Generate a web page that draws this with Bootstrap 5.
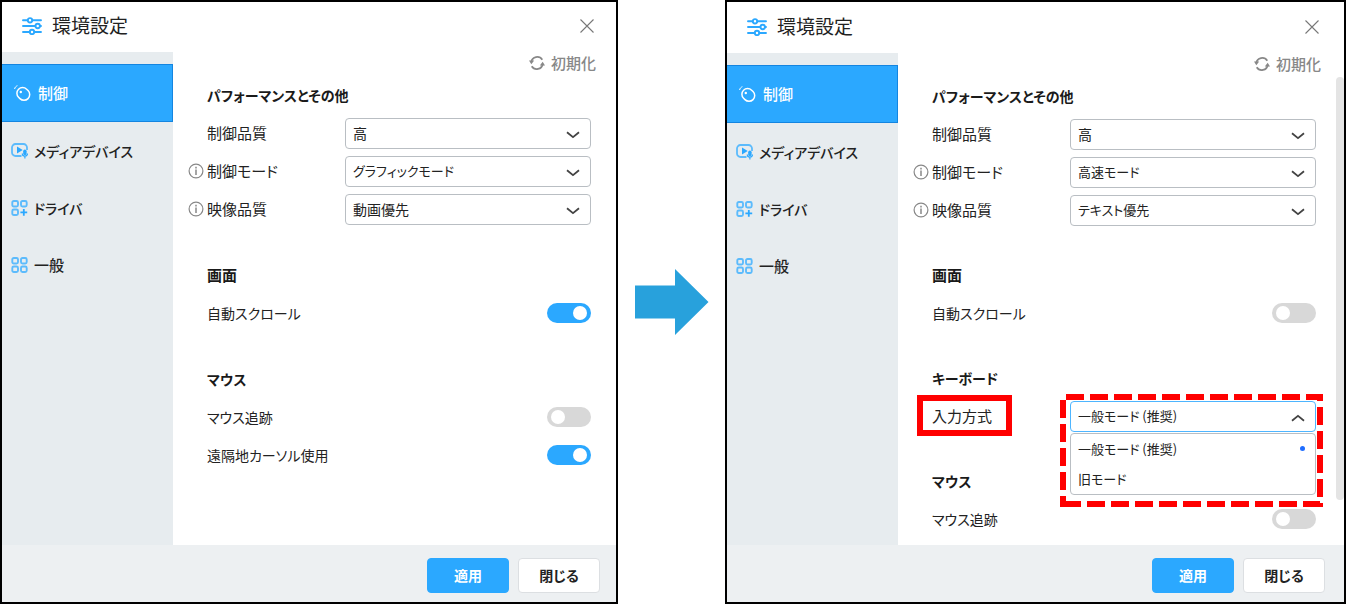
<!DOCTYPE html>
<html lang="ja">
<head>
<meta charset="utf-8">
<meta name="viewport" content="width=device-width, initial-scale=1">
<title>環境設定</title>
<link href="https://cdn.jsdelivr.net/npm/bootstrap@5.3.0/dist/css/bootstrap.min.css" rel="stylesheet">
<style>
  :root { --accent: #2ba8ff; --side-bg: #e7ecef; --callout: #ff0000; }
  body { font-family: "Noto Sans CJK JP", sans-serif; font-size: 15px; line-height: 20px; color: #222; background: #fff; }
  body, button, select, option { font-feature-settings: "palt"; }
  .compare { display: grid; grid-template-columns: 618fr 107fr 621fr; min-height: 100vh; }
  .settings { --edge: 0px; border: 2px solid #000; min-width: 0; }
  .settings-after { --edge: 3px; }
  .titlebar { height: 50px; padding: 0 calc(22px + var(--edge)) 2px 20px; }
  .settings-after .titlebar { height: 51px; }
  .titlebar h1 { font-size: 19px; line-height: 24px; font-weight: 400; margin: 0 0 2px 10px; }
  .close-x { border: 0; padding: 0; background: none; line-height: 0; }
  .side { width: 171px; background: var(--side-bg); padding-top: 12px; }
  .side .nav-link { height: 57px; padding: 0 9px; color: #222; font-weight: 500; border-radius: 0; gap: 6px; }
  .side .nav-link.active { height: 58px; background: var(--accent); border: 1px solid #1485e0; border-left: 0; color: #fff; padding-left: 11px; }
  .pane { padding: 0 calc(25px + var(--edge)) 0 15px; min-width: 0; }
  .scrolls .pane { padding-right: 20px; }
  .reset { height: 22px; margin: 0 -5px 2px 0; }
  .reset button { border: 0; background: none; padding: 0; color: #888; font-weight: 500; font-size: 15px; gap: 6px; }
  .group { margin-bottom: 28px; }
  .settings-after .group { margin-bottom: 27px; }
  .group h2 { font-size: 15px; line-height: 38px; font-weight: 600; margin: 0 0 0 19px; color: #1a1a1a; }
  .line { height: 38px; }
  .line .hint { width: 19px; line-height: 0; }
  .line .name { width: 138px; white-space: nowrap; }
  .line .form-select { height: 31px; padding: 0 30px 0 7px; font-size: 14px; line-height: 28px; color: #222; border: 1px solid #b9bec3; border-radius: 4px;
    background-image: url("data:image/svg+xml,%3Csvg xmlns='http://www.w3.org/2000/svg' viewBox='0 0 14 8'%3E%3Cpath d='M1 1.2l6 5 6-5' fill='none' stroke='%23444' stroke-width='1.8'/%3E%3C/svg%3E");
    background-size: 14px 8px; background-position: right 10px top 12px; }
  .line .form-select.opened { border-color: #4db5ff;
    background-image: url("data:image/svg+xml,%3Csvg xmlns='http://www.w3.org/2000/svg' viewBox='0 0 14 8'%3E%3Cpath d='M1 6.8l6-5 6 5' fill='none' stroke='%23444' stroke-width='1.8'/%3E%3C/svg%3E"); }
  .wide { width: auto; flex: 1 1 auto; }
  .form-switch { padding: 0; margin: 0; min-height: 0; line-height: 0; }
  .form-switch .form-check-input { float: none; margin: 0; width: 44px; height: 20px; border: 0; background-color: #d8d8d8; background-size: 14px; background-position: 4px center;
    background-image: url("data:image/svg+xml,%3Csvg xmlns='http://www.w3.org/2000/svg' viewBox='0 0 14 14'%3E%3Ccircle cx='7' cy='7' r='7' fill='white'/%3E%3C/svg%3E"); }
  .form-switch .form-check-input:checked { background-color: var(--accent); background-position: 26px center;
    background-image: url("data:image/svg+xml,%3Csvg xmlns='http://www.w3.org/2000/svg' viewBox='0 0 14 14'%3E%3Ccircle cx='7' cy='7' r='7' fill='white'/%3E%3C/svg%3E"); }
  .options { top: 100%; margin: 1px 0 0; padding: 0; list-style: none; background: #fff; border: 1px solid #b9bec3; border-radius: 4px; font-size: 13px; z-index: 2; }
  .options li { height: 30px; padding: 0 10px 0 7px; }
  .dot { width: 5px; height: 5px; background: #1f6dff; }
  .mark-label { inset: -11px auto auto -15px; width: 95px; height: 41px; border: 6px solid var(--callout); }
  .mark-menu { top: -7px; left: -10px; width: calc(100% + 17px); height: 113px; z-index: 3; pointer-events: none; }
  .thumb { width: 8px; background: #e4e4e4; border-radius: 4px; margin: 24px 0 45px; }
  .actions { height: 57px; background: #edf0f2; padding: 0 calc(16px + var(--edge)) 0 0; gap: 9px; padding-top: 4px; }
  .actions .btn { width: 82px; height: 35px; padding: 0; font-size: 14px; font-weight: 600; border-radius: 4px; }
  .btn-apply, .btn-apply:hover { background: var(--accent); color: #fff; border-color: var(--accent); }
  .btn-shut, .btn-shut:hover { background: #fff; color: #222; border-color: #dcdfe2; }
  /* kana-heavy text is set one step smaller */
  .side .kana, .group h2.kana, .line .name.kana { font-size: 14px; }
  .line .form-select.kana { font-size: 13px; }
</style>
</head>
<body>
<svg class="d-none" aria-hidden="true">
  <symbol id="i-sliders" viewBox="0 0 20 18"><g fill="none" stroke="#2ba8ff" stroke-width="1.900" stroke-linecap="round"><path d="M1 3.300h4.500M10.500 3.300H19M1 9h12.200M18.200 9H19M1 15h6.500M12.500 15H19"/><circle cx="8" cy="3.300" r="2.200"/><circle cx="15.700" cy="9" r="2.200"/><circle cx="10" cy="15" r="2.200"/></g></symbol>
  <symbol id="i-close" viewBox="0 0 14 14"><path d="M.5.5l13 13M13.500.5l-13 13" fill="none" stroke="#777" stroke-width="1.100"/></symbol>
  <symbol id="i-reset" viewBox="0 0 16 16"><g fill="none" stroke="#888" stroke-width="1.700"><path d="M2.200 7A6.100 6.100 0 0 1 13.300 4.700M13.800 9A6.100 6.100 0 0 1 2.700 11.300"/></g><path d="M0 5.500h5.200L2.300 9.200zM16 10.500h-5.200L13.700 6.800z" fill="#888"/></symbol>
  <symbol id="i-mouse" viewBox="0 0 17 17"><rect x="3.600" y="2.200" width="11.400" height="13.400" rx="5.700" transform="rotate(-45 9.300 8.900)" fill="none" stroke="#fff" stroke-width="1.500"/><circle cx="6.800" cy="7" r="1.200" fill="#fff"/><path d="M.6 4C.9 2.300 2 1.200 3.400.7" fill="none" stroke="#fff" stroke-width="1"/></symbol>
  <symbol id="i-media" viewBox="0 0 17 16"><path d="M10.500 13H4.500A3.500 3.500 0 0 1 1 9.500v-5A3.500 3.500 0 0 1 4.500 1h8A3.500 3.500 0 0 1 16 4.500V7" fill="none" stroke="#5cbbfc" stroke-width="1.800"/><path d="M6 3.600v6.800L11.700 7z" fill="#2ba8ff"/><rect x="12.200" y="6.600" width="3.400" height="5.600" rx="1.700" fill="#2ba8ff"/><path d="M11.300 10.500c0 3.600 5.200 3.600 5.200 0M13.900 13v2.500" fill="none" stroke="#2ba8ff" stroke-width="1.200"/></symbol>
  <symbol id="i-driver" viewBox="0 0 17 16"><g fill="none" stroke="#5cbbfc" stroke-width="1.900"><rect x="1.300" y="1" width="5.700" height="5.500" rx="1.500"/><rect x="10" y="1" width="5.700" height="5.500" rx="1.500"/><rect x="1.300" y="9.500" width="5.700" height="5.500" rx="1.500"/></g><path d="M12.800 9v6.700M9.400 12.300H16.200" stroke="#2ba8ff" stroke-width="1.800"/></symbol>
  <symbol id="i-general" viewBox="0 0 17 16"><g fill="none" stroke="#5cbbfc" stroke-width="1.900"><rect x="1.300" y="1" width="5.700" height="5.500" rx="1.500"/><rect x="10" y="1" width="5.700" height="5.500" rx="1.500"/><rect x="1.300" y="9.500" width="5.700" height="5.500" rx="1.500"/><rect x="10" y="9.500" width="5.700" height="5.500" rx="1.500"/></g></symbol>
  <symbol id="i-info" viewBox="0 0 16 16"><circle cx="8" cy="8" r="6.900" fill="none" stroke="#888" stroke-width="1.200"/><path d="M8 6.600V12M8 3.800v1.600" stroke="#888" stroke-width="1.500"/></symbol>
</svg>

<main class="compare">
  <section class="settings d-flex flex-column" aria-label="変更前">
    <header class="titlebar d-flex align-items-center">
      <svg width="20" height="18"><use href="#i-sliders"/></svg>
      <h1>環境設定</h1>
      <button type="button" class="close-x ms-auto" aria-label="閉じる"><svg width="14" height="14"><use href="#i-close"/></svg></button>
    </header>
    <div class="d-flex flex-grow-1">
      <nav class="side nav flex-column flex-nowrap flex-shrink-0">
        <a href="#" class="nav-link active d-flex align-items-center"><svg width="19" height="17"><use href="#i-mouse"/></svg>制御</a>
        <a href="#" class="nav-link kana d-flex align-items-center"><svg width="17" height="16"><use href="#i-media"/></svg>メディアデバイス</a>
        <a href="#" class="nav-link kana d-flex align-items-center"><svg width="17" height="16"><use href="#i-driver"/></svg>ドライバ</a>
        <a href="#" class="nav-link d-flex align-items-center"><svg width="17" height="16"><use href="#i-general"/></svg>一般</a>
      </nav>
      <div class="pane flex-grow-1">
        <div class="reset d-flex justify-content-end"><button type="button" class="d-flex align-items-center"><svg width="16" height="16"><use href="#i-reset"/></svg>初期化</button></div>
        <div class="group">
          <h2 class="kana">パフォーマンスとその他</h2>
          <div class="line d-flex align-items-center"><span class="hint"></span><label class="name" for="a1">制御品質</label><select class="form-select wide" id="a1"><option>高</option></select></div>
          <div class="line d-flex align-items-center"><span class="hint"><svg width="16" height="16"><use href="#i-info"/></svg></span><label class="name" for="a2">制御モード</label><select class="form-select wide kana" id="a2"><option>グラフィックモード</option></select></div>
          <div class="line d-flex align-items-center"><span class="hint"><svg width="16" height="16"><use href="#i-info"/></svg></span><label class="name" for="a3">映像品質</label><select class="form-select wide" id="a3"><option>動画優先</option></select></div>
        </div>
        <div class="group">
          <h2>画面</h2>
          <div class="line d-flex align-items-center"><span class="hint"></span><label class="name kana" for="a4">自動スクロール</label><div class="form-check form-switch ms-auto"><input class="form-check-input" type="checkbox" role="switch" id="a4" checked></div></div>
        </div>
        <div class="group mb-0">
          <h2 class="kana">マウス</h2>
          <div class="line d-flex align-items-center"><span class="hint"></span><label class="name kana" for="a5">マウス追跡</label><div class="form-check form-switch ms-auto"><input class="form-check-input" type="checkbox" role="switch" id="a5"></div></div>
          <div class="line d-flex align-items-center"><span class="hint"></span><label class="name kana" for="a6">遠隔地カーソル使用</label><div class="form-check form-switch ms-auto"><input class="form-check-input" type="checkbox" role="switch" id="a6" checked></div></div>
        </div>
      </div>
    </div>
    <footer class="actions d-flex align-items-center justify-content-end">
      <button type="button" class="btn btn-apply">適用</button>
      <button type="button" class="btn btn-shut">閉じる</button>
    </footer>
  </section>

  <div class="d-flex align-items-center justify-content-center">
    <svg width="74" height="66" viewBox="0 0 74 66" role="img" aria-label="変更後へ"><path d="M0 16.500h40V0l33.500 33L40 66V49.500H0z" fill="#28a1dc"/></svg>
  </div>

  <section class="settings settings-after d-flex flex-column" aria-label="変更後">
    <header class="titlebar d-flex align-items-center">
      <svg width="20" height="18"><use href="#i-sliders"/></svg>
      <h1>環境設定</h1>
      <button type="button" class="close-x ms-auto" aria-label="閉じる"><svg width="14" height="14"><use href="#i-close"/></svg></button>
    </header>
    <div class="scrolls d-flex flex-grow-1">
      <nav class="side nav flex-column flex-nowrap flex-shrink-0">
        <a href="#" class="nav-link active d-flex align-items-center"><svg width="19" height="17"><use href="#i-mouse"/></svg>制御</a>
        <a href="#" class="nav-link kana d-flex align-items-center"><svg width="17" height="16"><use href="#i-media"/></svg>メディアデバイス</a>
        <a href="#" class="nav-link kana d-flex align-items-center"><svg width="17" height="16"><use href="#i-driver"/></svg>ドライバ</a>
        <a href="#" class="nav-link d-flex align-items-center"><svg width="17" height="16"><use href="#i-general"/></svg>一般</a>
      </nav>
      <div class="pane flex-grow-1">
        <div class="reset d-flex justify-content-end"><button type="button" class="d-flex align-items-center"><svg width="16" height="16"><use href="#i-reset"/></svg>初期化</button></div>
        <div class="group">
          <h2 class="kana">パフォーマンスとその他</h2>
          <div class="line d-flex align-items-center"><span class="hint"></span><label class="name" for="b1">制御品質</label><select class="form-select wide" id="b1"><option>高</option></select></div>
          <div class="line d-flex align-items-center"><span class="hint"><svg width="16" height="16"><use href="#i-info"/></svg></span><label class="name" for="b2">制御モード</label><select class="form-select wide kana" id="b2"><option>高速モード</option></select></div>
          <div class="line d-flex align-items-center"><span class="hint"><svg width="16" height="16"><use href="#i-info"/></svg></span><label class="name" for="b3">映像品質</label><select class="form-select wide kana" id="b3"><option>テキスト優先</option></select></div>
        </div>
        <div class="group">
          <h2>画面</h2>
          <div class="line d-flex align-items-center"><span class="hint"></span><label class="name kana" for="b4">自動スクロール</label><div class="form-check form-switch ms-auto"><input class="form-check-input" type="checkbox" role="switch" id="b4"></div></div>
        </div>
        <div class="group">
          <h2 class="kana">キーボード</h2>
          <div class="line d-flex align-items-center"><span class="hint"></span>
            <label class="name position-relative" for="b5">入力方式<span class="mark-label position-absolute"></span></label>
            <div class="wide position-relative">
              <select class="form-select opened kana" id="b5"><option>一般モード (推奨)</option><option>旧モード</option></select>
              <ul class="options position-absolute w-100" role="listbox">
                <li class="d-flex align-items-center justify-content-between" role="option" aria-selected="true">一般モード (推奨)<span class="dot rounded-circle"></span></li>
                <li class="d-flex align-items-center" role="option" aria-selected="false">旧モード</li>
              </ul>
              <svg class="mark-menu position-absolute" viewBox="0 0 263 113" preserveAspectRatio="none" aria-hidden="true"><path d="M6 3H260V110H3M3 113V102M3 96V6" fill="none" stroke="#f00" stroke-width="6" stroke-dasharray="18 6"/></svg>
            </div>
          </div>
        </div>
        <div class="group mb-0">
          <h2 class="kana">マウス</h2>
          <div class="line d-flex align-items-center"><span class="hint"></span><label class="name kana" for="b6">マウス追跡</label><div class="form-check form-switch ms-auto"><input class="form-check-input" type="checkbox" role="switch" id="b6"></div></div>
        </div>
      </div>
      <div class="thumb flex-shrink-0"></div>
    </div>
    <footer class="actions d-flex align-items-center justify-content-end">
      <button type="button" class="btn btn-apply">適用</button>
      <button type="button" class="btn btn-shut">閉じる</button>
    </footer>
  </section>
</main>
<script src="https://cdn.jsdelivr.net/npm/bootstrap@5.3.0/dist/js/bootstrap.bundle.min.js"></script>
</body>
</html>
